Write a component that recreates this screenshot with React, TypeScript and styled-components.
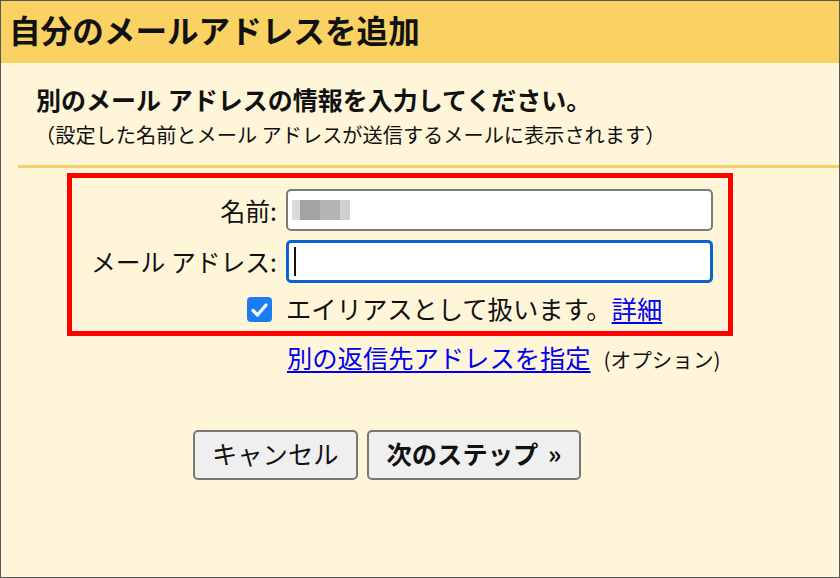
import React from "react";
import styled, { createGlobalStyle } from "styled-components";

const GlobalStyle = createGlobalStyle`
  html, body {
    margin: 0;
    padding: 0;
    background: #fff;
  }
  * {
    box-sizing: border-box;
  }
`;

const FONT = `"Noto Sans CJK JP", "Noto Sans", sans-serif`;

const Frame = styled.div`
  width: 840px;
  height: 578px;
  border: 1px solid #575757;
  background: #fff6d9;
  font-family: ${FONT};
  color: #111;
  overflow: hidden;
`;

const Header = styled.div`
  height: 62px;
  background: #f9d263;
  display: flex;
  align-items: center;
  padding: 0 0 4px 8px;
`;

const Title = styled.h1`
  margin: 0;
  font-size: 31.6px;
  font-weight: 700;
  line-height: 1;
`;

const Intro = styled.div`
  padding: 21px 0 0 35px;
  height: 102px;
`;

const Lead = styled.div`
  font-size: 25px;
  font-weight: 700;
  line-height: 30px;
  word-spacing: 1px;
`;

const Note = styled.div`
  font-size: 20.2px;
  line-height: 26px;
  margin-top: 8px;
  margin-left: -1px;
`;

const Divider = styled.div`
  margin-left: 17px;
  height: 3px;
  background: #f6d065;
`;

const Highlight = styled.div`
  margin: 5px 0 0 66px;
  width: 666px;
  height: 163px;
  border: 5px solid #ff0000;
  padding-top: 11px;
`;

const FormGrid = styled.div`
  display: grid;
  grid-template-columns: 205px 427px;
  column-gap: 9px;
  row-gap: 9px;
  align-items: center;
`;

const Label = styled.div`
  font-size: 24.8px;
  text-align: right;
  line-height: 1;
  white-space: nowrap;
`;

const Field = styled.div<{ $focused?: boolean }>`
  height: ${(p) => (p.$focused ? 43 : 42)}px;
  background: #fff;
  border: ${(p) => (p.$focused ? "3px solid #0a63d1" : "2px solid #7a7a7a")};
  border-radius: 5px;
  display: flex;
  align-items: center;
  padding-left: ${(p) => (p.$focused ? 5 : 4)}px;
`;

const Pixels = styled.div`
  display: flex;
  height: 20px;
`;

const Pixel = styled.span<{ $shade: string; $w: number }>`
  display: block;
  width: ${(p) => p.$w}px;
  height: 100%;
  background: ${(p) => p.$shade};
`;

const Caret = styled.span`
  display: block;
  width: 2px;
  height: 29px;
  background: #111;
`;

const CheckCell = styled.div`
  display: flex;
  justify-content: flex-end;
  padding-right: 5px;
  margin-top: 5px;
`;

const CheckBox = styled.span`
  width: 25px;
  height: 25px;
  border-radius: 4px;
  background: #1b7cf0;
  display: flex;
  align-items: center;
  justify-content: center;
`;

const CheckText = styled.div`
  font-size: 25.3px;
  line-height: 1;
  margin-top: 4px;
  white-space: nowrap;
`;

const Link = styled.a`
  color: #0000ee;
  text-decoration: underline;
  text-underline-offset: 3px;
  cursor: pointer;
`;

const ReplyRow = styled.div`
  padding: 6px 0 0 286px;
  display: flex;
  align-items: baseline;
  white-space: nowrap;
`;

const ReplyLink = styled(Link)`
  font-size: 25.3px;
  line-height: 30px;
`;

const Optional = styled.span`
  font-size: 20.6px;
  margin-left: 13px;
`;

const Actions = styled.div`
  display: flex;
  gap: 9px;
  padding: 56px 0 0 192px;
`;

const Button = styled.button<{ $primary?: boolean }>`
  height: 50px;
  padding: 0 ${(p) => (p.$primary ? 18 : 17)}px 2px;
  border: 2px solid #787878;
  border-radius: 5px;
  background: #efefef;
  font-family: ${FONT};
  font-size: 25.3px;
  font-weight: ${(p) => (p.$primary ? 700 : 400)};
  word-spacing: ${(p) => (p.$primary ? 4 : 0)}px;
  color: #111;
  line-height: 1;
  cursor: pointer;
`;

const blurred = [
  { w: 8, shade: "#dadada" },
  { w: 20, shade: "#a3a3a3" },
  { w: 20, shade: "#b4b4b4" },
  { w: 10, shade: "#cfcfcf" },
];

export default function App() {
  return (
    <>
      <GlobalStyle />
      <Frame>
        <Header>
          <Title>自分のメールアドレスを追加</Title>
        </Header>
        <Intro>
          <Lead>別のメール アドレスの情報を入力してください。</Lead>
          <Note>（設定した名前とメール アドレスが送信するメールに表示されます）</Note>
        </Intro>
        <Divider />
        <Highlight>
          <FormGrid>
            <Label>名前:</Label>
            <Field>
              <Pixels>
                {blurred.map((b, i) => (
                  <Pixel key={i} $w={b.w} $shade={b.shade} />
                ))}
              </Pixels>
            </Field>
            <Label>メール アドレス:</Label>
            <Field $focused>
              <Caret />
            </Field>
            <CheckCell>
              <CheckBox>
                <svg width="17" height="14" viewBox="0 0 17 14">
                  <path
                    d="M2 7.5 L6.5 12 L15 2"
                    fill="none"
                    stroke="#fff"
                    strokeWidth="3.2"
                    strokeLinecap="round"
                    strokeLinejoin="round"
                  />
                </svg>
              </CheckBox>
            </CheckCell>
            <CheckText>
              エイリアスとして扱います。<Link>詳細</Link>
            </CheckText>
          </FormGrid>
        </Highlight>
        <ReplyRow>
          <ReplyLink>別の返信先アドレスを指定</ReplyLink>
          <Optional>(オプション)</Optional>
        </ReplyRow>
        <Actions>
          <Button>キャンセル</Button>
          <Button $primary>次のステップ »</Button>
        </Actions>
      </Frame>
    </>
  );
}
